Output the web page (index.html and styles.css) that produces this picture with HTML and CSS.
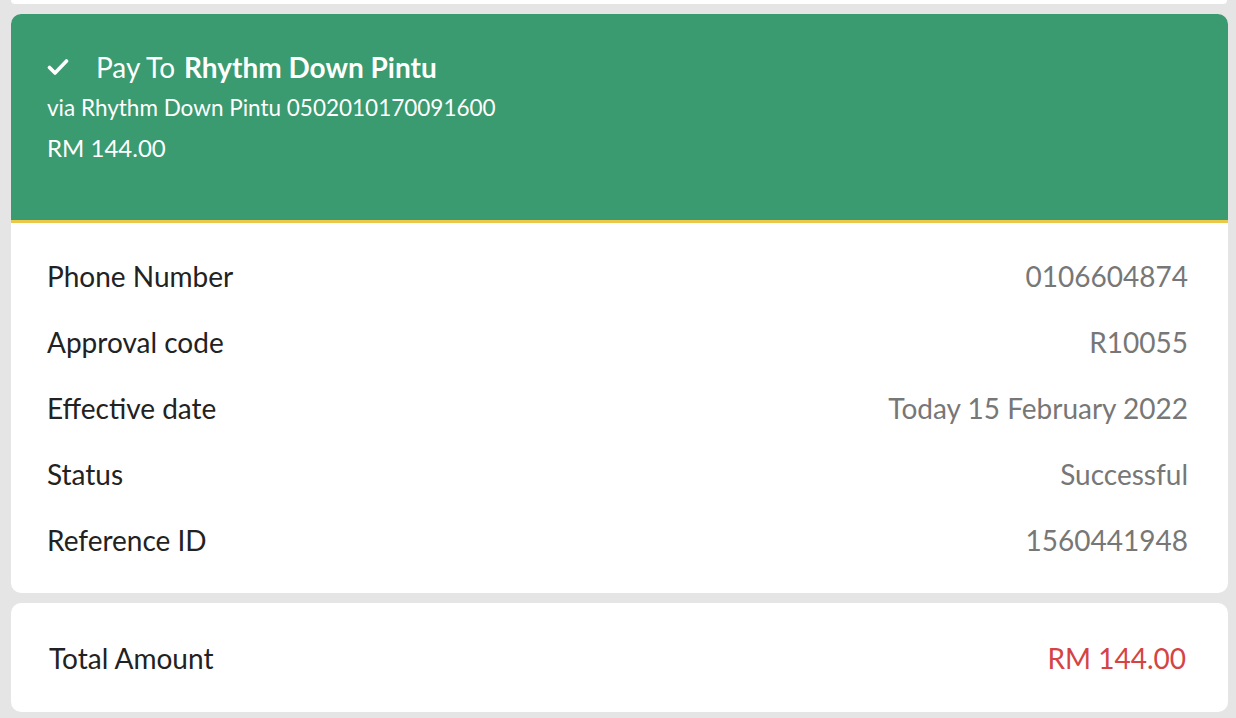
FILE: index.html
```html
<!DOCTYPE html>
<html>
<head>
<meta charset="utf-8">
<link rel="stylesheet" href="styles.css">
</head>
<body>
<div class="page">
  <div class="stub"></div>
  <div class="card receipt">
    <div class="header">
      <div class="title">
        <svg class="check" width="22" height="18" viewBox="0 0 22 18"><path d="M2.5 9.5 L8 15 L19.5 3" fill="none" stroke="#fff" stroke-width="3.6" stroke-linecap="round" stroke-linejoin="round"/></svg>
        <span class="pay">Pay To</span>
        <span class="name">Rhythm Down Pintu</span>
      </div>
      <div class="sub">via Rhythm Down Pintu 0502010170091600</div>
      <div class="sub sub-amount">RM 144.00</div>
    </div>
    <div class="rows">
      <div class="row"><span class="label">Phone Number</span><span class="value">0106604874</span></div>
      <div class="row"><span class="label">Approval code</span><span class="value">R10055</span></div>
      <div class="row"><span class="label">Effective date</span><span class="value">Today 15 February 2022</span></div>
      <div class="row"><span class="label">Status</span><span class="value">Successful</span></div>
      <div class="row"><span class="label">Reference ID</span><span class="value">1560441948</span></div>
    </div>
  </div>
  <div class="card total">
    <span class="label">Total Amount</span>
    <span class="amount">RM 144.00</span>
  </div>
</div>
</body>
</html>
```
FILE: styles.css
```css
html, body {
  margin: 0;
  padding: 0;
  background: #e5e5e5;
  font-family: Lato, "Open Sans", sans-serif;
}
.page {
  padding: 0 8px 0 11px;
  display: flex;
  flex-direction: column;
}
.stub {
  height: 4px;
  background: #fff;
  border-radius: 0 0 10px 10px;
  margin-right: 1px;
}
.card {
  background: #fff;
  border-radius: 10px;
  overflow: hidden;
}
.receipt {
  margin-top: 10px;
}
.header {
  background: #3a9a70;
  border-bottom: 3px solid #e9c84a;
  height: 209px;
  box-sizing: border-box;
  padding: 39px 36px 0;
  color: #fff;
}
.title {
  display: flex;
  align-items: center;
  height: 28px;
  font-size: 28px;
  margin-bottom: 7px;
}
.check {
  margin-right: 27px;
}
.pay {
  margin-right: 9px;
}
.name {
  font-weight: 700;
}
.sub {
  font-size: 22.5px;
  height: 40px;
  line-height: 40px;
}
.sub-amount {
  font-size: 24px;
}
.rows {
  padding: 20px 40px 20px 36px;
}
.row {
  height: 66px;
  display: flex;
  align-items: center;
  justify-content: space-between;
  font-size: 28px;
}
.label {
  color: #222;
}
.value {
  color: #777;
}
.total {
  margin-top: 10px;
  height: 109px;
  display: flex;
  align-items: center;
  justify-content: space-between;
  padding: 0 42px 0 38px;
  font-size: 28px;
}
.amount {
  color: #d64343;
}
```
